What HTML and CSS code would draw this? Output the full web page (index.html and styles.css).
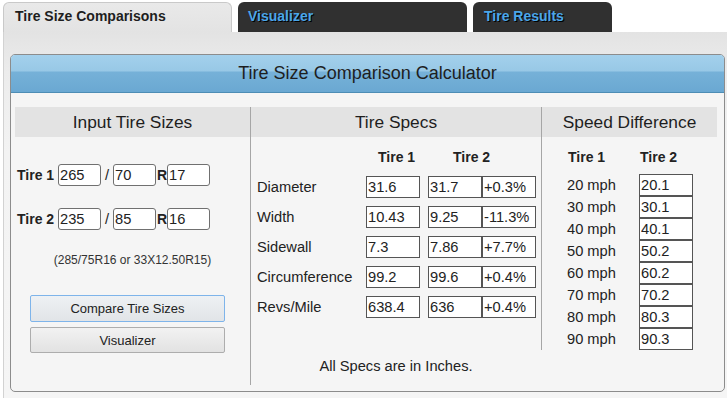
FILE: index.html
```html
<!DOCTYPE html>
<html lang="en">
<head>
<meta charset="utf-8">
<title>Tire Size Comparison Calculator</title>
<link rel="stylesheet" href="styles.css">
</head>
<body>
<div class="tabs">
  <div class="tab tab-active">Tire Size Comparisons</div>
  <div class="tab tab-dark tab-vis">Visualizer</div>
  <div class="tab tab-dark tab-res">Tire Results</div>
</div>
<div class="page">
  <div class="panel">
    <div class="panel-head">Tire Size Comparison Calculator</div>
    <div class="panel-body">
      <div class="col col-input">
        <div class="sec-head">Input Tire Sizes</div>
        <div class="size-row first">
          <span class="size-label">Tire 1</span>
          <input class="size-in" type="text" value="265">
          <span class="slash">/</span>
          <input class="size-in" type="text" value="70">
          <span class="rim">R</span>
          <input class="size-in" type="text" value="17">
        </div>
        <div class="size-row second">
          <span class="size-label">Tire 2</span>
          <input class="size-in" type="text" value="235">
          <span class="slash">/</span>
          <input class="size-in" type="text" value="85">
          <span class="rim">R</span>
          <input class="size-in" type="text" value="16">
        </div>
        <div class="note">(285/75R16 or 33X12.50R15)</div>
        <button class="btn btn-primary" type="button">Compare Tire Sizes</button>
        <button class="btn btn-secondary" type="button">Visualizer</button>
      </div>
      <div class="col col-specs">
        <div class="sec-head">Tire Specs</div>
        <div class="spec-headrow">
          <span class="sh-1">Tire 1</span>
          <span class="sh-2">Tire 2</span>
        </div>
        <div class="spec-rows">
          <div class="spec-row"><span class="spec-label">Diameter</span><input class="cell" readonly value="31.6"><input class="cell t2" readonly value="31.7"><input class="cell" readonly value="+0.3%"></div>
          <div class="spec-row"><span class="spec-label">Width</span><input class="cell" readonly value="10.43"><input class="cell t2" readonly value="9.25"><input class="cell" readonly value="-11.3%"></div>
          <div class="spec-row"><span class="spec-label">Sidewall</span><input class="cell" readonly value="7.3"><input class="cell t2" readonly value="7.86"><input class="cell" readonly value="+7.7%"></div>
          <div class="spec-row"><span class="spec-label">Circumference</span><input class="cell" readonly value="99.2"><input class="cell t2" readonly value="99.6"><input class="cell" readonly value="+0.4%"></div>
          <div class="spec-row"><span class="spec-label">Revs/Mile</span><input class="cell" readonly value="638.4"><input class="cell t2" readonly value="636"><input class="cell" readonly value="+0.4%"></div>
        </div>
        <div class="spec-foot">All Specs are in Inches.</div>
      </div>
      <div class="col col-speed">
        <div class="sec-head">Speed Difference</div>
        <div class="speed-headrow">
          <span class="sp-1">Tire 1</span>
          <span class="sp-2">Tire 2</span>
        </div>
        <div class="speed-rows">
          <div class="speed-row"><span class="mph">20 mph</span><input class="cell" readonly value="20.1"></div>
          <div class="speed-row"><span class="mph">30 mph</span><input class="cell" readonly value="30.1"></div>
          <div class="speed-row"><span class="mph">40 mph</span><input class="cell" readonly value="40.1"></div>
          <div class="speed-row"><span class="mph">50 mph</span><input class="cell" readonly value="50.2"></div>
          <div class="speed-row"><span class="mph">60 mph</span><input class="cell" readonly value="60.2"></div>
          <div class="speed-row"><span class="mph">70 mph</span><input class="cell" readonly value="70.2"></div>
          <div class="speed-row"><span class="mph">80 mph</span><input class="cell" readonly value="80.3"></div>
          <div class="speed-row"><span class="mph">90 mph</span><input class="cell" readonly value="90.3"></div>
        </div>
      </div>
    </div>
  </div>
</div>
</body>
</html>
```
FILE: styles.css
```css
* { box-sizing: border-box; }

body {
  margin: 0;
  font-family: "Liberation Sans", Arial, sans-serif;
  color: #222;
  background: #fff;
  overflow: hidden;
}

/* Tabs */
.tabs {
  display: flex;
  align-items: flex-end;
  height: 32px;
  padding-left: 3px;
}
.tab {
  height: 30px;
  font-size: 14px;
  font-weight: bold;
  line-height: 27px;
  border-radius: 6px 6px 0 0;
  white-space: nowrap;
}
.tab-active {
  width: 229px;
  padding-left: 11px;
  background: linear-gradient(#e9e9e9, #e3e3e3);
  border: 1px solid #c9c9c9;
  border-bottom: 0;
  color: #1e1e1e;
}
.tab-dark {
  margin-left: 6px;
  padding-left: 10px;
  background: #303030;
  color: #4aa6ea;
  text-shadow: 1px 1px 0 #000;
  line-height: 29px;
}
.tab-vis { width: 229px; }
.tab-res { width: 139px; padding-left: 11px; }

/* Page area */
.page {
  margin-left: 3px;
  height: 366px;
  border-left: 1px solid #d2d2d2;
  background: linear-gradient(#e3e3e3, #ececec 40px, #f3f3f3 120px, #f5f5f5);
  padding: 22px 2px 0 6px;
}

.panel {
  height: 338px;
  border: 1px solid #8c8c8c;
  border-radius: 5px;
  background: #f5f5f5;
  overflow: hidden;
}
.panel-head {
  height: 38px;
  border-bottom: 1px solid #4d8db5;
  background: linear-gradient(#a3d0ec 0, #98c8e6 16px, #76b1d8 17px, #6aa8d2 100%);
  text-align: center;
  font-size: 18px;
  line-height: 36px;
  color: #1e1e1e;
}
.panel-body {
  display: flex;
  padding: 14px 7px 0 4px;
}

.col { display: flex; flex-direction: column; }
.col-input { width: 236px; border-right: 1px solid #a6a6a6; }
.col-specs { width: 290px; padding-bottom: 9px; }
.col-speed { width: 176px; border-left: 1px solid #a6a6a6; align-self: flex-start; }

.sec-head {
  height: 30px;
  background: #e3e3e3;
  text-align: center;
  font-size: 13pt;
  line-height: 30px;
  color: #1e1e1e;
}

/* Input column */
.size-row {
  display: flex;
  align-items: center;
  height: 22px;
  padding-left: 2px;
}
.size-row.first { margin-top: 27px; }
.size-row.second { margin-top: 22px; }
.size-label {
  width: 41px;
  font-size: 14px;
  font-weight: bold;
}
.size-in {
  width: 43px;
  height: 22px;
  padding: 0 1px;
  border: 1px solid #707070;
  border-radius: 3px;
  background: #fff;
  font-family: inherit;
  font-size: 11pt;
  color: #222;
  outline: none;
}
.slash {
  width: 12px;
  text-align: center;
  font-size: 11pt;
}
.rim {
  width: 11px;
  font-size: 14px;
  font-weight: bold;
  padding-left: 1px;
}
.note {
  margin-top: 22px;
  height: 16px;
  line-height: 16px;
  text-align: center;
  font-size: 12px;
  color: #333;
}
.btn {
  display: block;
  width: 195px;
  margin-left: 15px;
  font-family: inherit;
  font-size: 13px;
  color: #222;
  border-radius: 2px;
  background: linear-gradient(#f2f2f2, #e2e2e2);
  padding: 0;
}
.btn-primary {
  margin-top: 27px;
  height: 27px;
  border: 1px solid #7eb4ea;
  background: linear-gradient(#eef1f4, #e1e4e7);
}
.btn-secondary {
  margin-top: 5px;
  height: 26px;
  border: 1px solid #adadad;
}

/* Specs column */
.spec-headrow {
  display: flex;
  margin-top: 10px;
  height: 20px;
  line-height: 20px;
  font-size: 14px;
  font-weight: bold;
  padding-left: 127px;
}
.sh-1 { width: 75px; }
.spec-rows {
  margin-top: 9px;
  display: flex;
  flex-direction: column;
  gap: 8px;
  padding-left: 6px;
}
.spec-row {
  display: flex;
  align-items: center;
  height: 22px;
}
.spec-label {
  width: 109px;
  font-size: 11pt;
}
.cell {
  width: 54px;
  height: 22px;
  padding: 0 1px;
  border: 1px solid #555;
  border-radius: 0;
  background: #fff;
  font-family: inherit;
  font-size: 11pt;
  color: #222;
  outline: none;
}
.cell.t2 { margin-left: 8px; }
.spec-foot {
  margin-top: 38px;
  height: 20px;
  line-height: 20px;
  text-align: center;
  font-size: 11pt;
}

/* Speed column */
.speed-headrow {
  display: flex;
  margin-top: 10px;
  height: 20px;
  line-height: 20px;
  font-size: 14px;
  font-weight: bold;
  padding-left: 26px;
}
.sp-1 { width: 72px; }
.speed-rows {
  margin-top: 7px;
  padding-left: 25px;
  display: flex;
  flex-direction: column;
}
.speed-row {
  display: flex;
  align-items: center;
  height: 22px;
}
.mph {
  width: 72px;
  font-size: 11pt;
}
```
